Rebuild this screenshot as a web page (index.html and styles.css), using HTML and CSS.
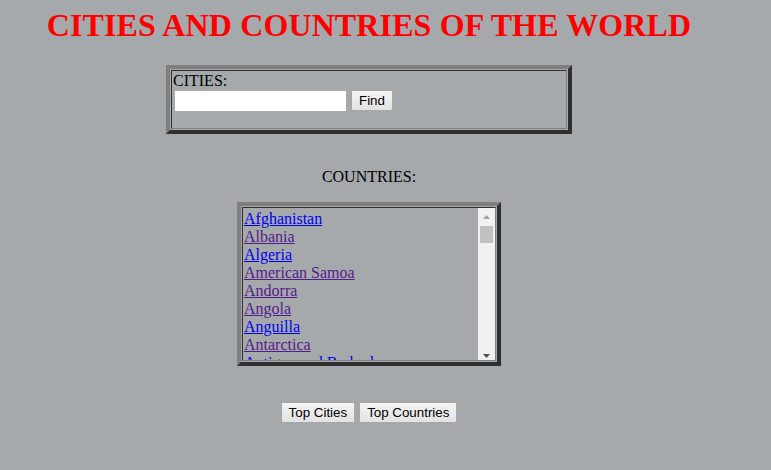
FILE: index.html
```html
<!DOCTYPE html>
<html>
<head>
<meta charset="utf-8">
<title>Cities and Countries of the World</title>
<link rel="stylesheet" href="styles.css">
</head>
<body>
<div class="page">
  <h1 class="title">CITIES AND COUNTRIES OF THE WORLD</h1>

  <div class="frame cities-frame">
    <div class="cell cities-cell">
      <div class="label-line">CITIES:</div>
      <div class="search-row">
        <input class="search-input" type="text">
        <button class="btn" type="button">Find</button>
      </div>
    </div>
  </div>

  <div class="countries-label">COUNTRIES:</div>

  <div class="frame countries-frame">
    <div class="cell countries-cell">
      <div class="list">
        <a class="link" href="#">Afghanistan</a>
        <a class="link visited" href="#">Albania</a>
        <a class="link" href="#">Algeria</a>
        <a class="link visited" href="#">American Samoa</a>
        <a class="link visited" href="#">Andorra</a>
        <a class="link visited" href="#">Angola</a>
        <a class="link" href="#">Anguilla</a>
        <a class="link visited" href="#">Antarctica</a>
        <a class="link" href="#">Antigua and Barbuda</a>
        <a class="link" href="#">Argentina</a>
        <a class="link" href="#">Armenia</a>
        <a class="link" href="#">Aruba</a>
      </div>
      <div class="scrollbar">
        <div class="sb-up">
          <svg width="7" height="4" viewBox="0 0 7 4"><polygon points="3.5,0 7,4 0,4" fill="#a3a3a3"/></svg>
        </div>
        <div class="sb-thumb"></div>
        <div class="sb-down">
          <svg width="7" height="4" viewBox="0 0 7 4"><polygon points="0,0 7,0 3.5,4" fill="#505050"/></svg>
        </div>
      </div>
    </div>
  </div>

  <div class="actions">
    <button class="btn" type="button">Top Cities</button>
    <button class="btn" type="button">Top Countries</button>
  </div>
</div>
</body>
</html>
```
FILE: styles.css
```css
html, body {
  margin: 0;
  padding: 0;
  background: #a5a9ac;
}

body {
  font-family: "Liberation Serif", "Times New Roman", serif;
  font-size: 16px;
  color: #000;
}

.page {
  width: 738px;
  padding-top: 7px;
  display: flex;
  flex-direction: column;
  align-items: center;
}

.title {
  margin: 0 0 21px 0;
  font-size: 32px;
  line-height: 37px;
  font-weight: bold;
  letter-spacing: 0.12px;
  color: #ff0000;
  white-space: nowrap;
}

.frame {
  box-sizing: border-box;
  border: 4px solid;
  border-color: #7f7f7f #2f2f2f #2f2f2f #7f7f7f;
  padding: 1px;
}

.cell {
  box-sizing: border-box;
  border: 1px solid;
  border-color: #2f2f2f #7f7f7f #7f7f7f #2f2f2f;
  height: 100%;
}

.cities-frame {
  width: 406px;
  height: 69px;
}

.cities-cell {
  padding: 1px 1px;
}

.label-line {
  line-height: 18px;
  height: 18px;
}

.search-row {
  display: flex;
  align-items: flex-start;
  gap: 5px;
}

.search-input {
  box-sizing: border-box;
  width: 171px;
  height: 20px;
  margin: 1px 0 0 2px;
  border: 0;
  padding: 0 2px;
  background: #ffffff;
  font-family: "Liberation Sans", Arial, sans-serif;
  font-size: 13px;
  outline: none;
}

.btn {
  box-sizing: border-box;
  height: 21px;
  padding: 0 7px;
  border: 1px solid #a8a8a8;
  border-radius: 2px;
  background: linear-gradient(#f5f5f5, #e2e2e2);
  font-family: "Liberation Sans", Arial, sans-serif;
  font-size: 13.33px;
  line-height: 17px;
  color: #000;
  cursor: default;
}

.countries-label {
  margin-top: 34px;
  line-height: 18px;
  height: 18px;
}

.countries-frame {
  margin-top: 16px;
  width: 264px;
  height: 164px;
}

.countries-cell {
  display: flex;
  overflow: hidden;
}

.list {
  flex: 1;
  overflow: hidden;
  padding: 2px 0 0 1px;
  text-align: left;
}

.link {
  display: block;
  line-height: 18px;
  color: #0000ee;
  text-decoration: underline;
  white-space: nowrap;
}

.link.visited {
  color: #551a8b;
}

.scrollbar {
  width: 17px;
  flex: none;
  background: #f1f1f1;
  display: flex;
  flex-direction: column;
}

.sb-up {
  height: 18px;
  display: flex;
  justify-content: center;
  padding-top: 7px;
  box-sizing: border-box;
}

.sb-up svg,
.sb-down svg {
  display: block;
}

.sb-thumb {
  margin: 0 2px;
  height: 17px;
  background: #c1c1c1;
}

.sb-down {
  margin-top: auto;
  height: 17px;
  display: flex;
  justify-content: center;
  padding-top: 11px;
  box-sizing: border-box;
}

.actions {
  margin-top: 36px;
  display: flex;
  gap: 4px;
}
```
